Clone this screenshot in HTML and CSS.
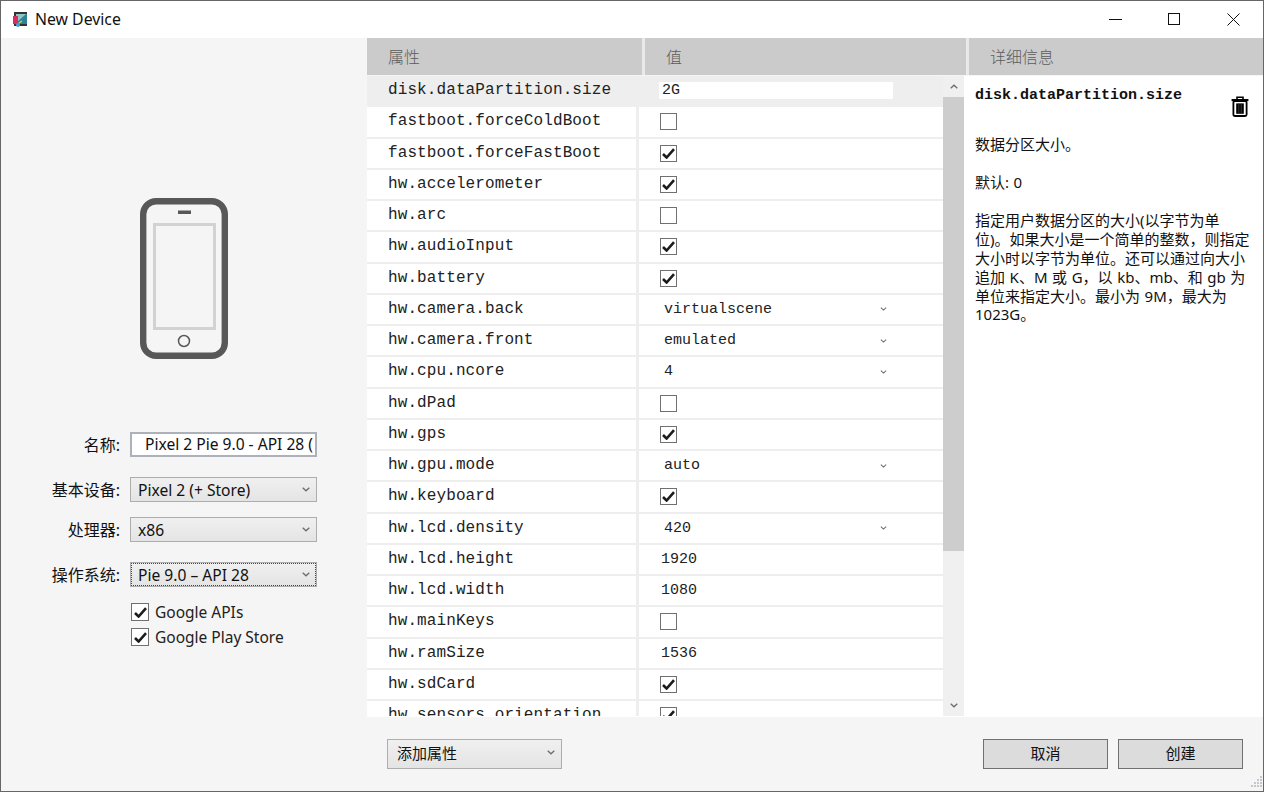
FILE: index.html
```html
<!DOCTYPE html>
<html lang="zh">
<head>
<meta charset="utf-8">
<title>New Device</title>
<link rel="stylesheet" href="styles.css">
</head>
<body>
<svg class="defs" width="0" height="0">
  <symbol id="chev" viewBox="0 0 8 5"><path d="M.7 .7 4 3.8 7.3 .7" fill="none" stroke="#6d6d6d" stroke-width="1.3"/></symbol>
  <symbol id="tick" viewBox="0 0 13 11"><path d="M1 6 4.6 9.5 12 1.2" fill="none" stroke="#1c1c1c" stroke-width="2.6"/></symbol>
</svg>
<div class="window">
  <header class="titlebar">
    <svg class="app-icon" viewBox="0 0 15 16" width="15" height="16">
      <rect x="1" y="1" width="13" height="14" fill="#333"/>
      <rect x="3" y="3" width="11" height="10" fill="#2d8296"/>
      <path d="M3 3h10L3 12z" fill="#8fc6c4"/>
      <rect x="0" y="5" width="5" height="8" fill="#d92a64"/>
      <circle cx="5" cy="14" r="2" fill="#4a9fe0"/>
      <path d="M6 12 9 10" stroke="#d7d34a" stroke-width="1.5"/>
    </svg>
    <span class="title">New Device</span>
    <div class="win-controls">
      <svg class="win-btn" viewBox="0 0 13 13" width="13" height="13"><path d="M0 6.5h13" stroke="#111" stroke-width="1"/></svg>
      <svg class="win-btn" viewBox="0 0 13 13" width="13" height="13"><rect x=".5" y=".5" width="11" height="11" fill="none" stroke="#111"/></svg>
      <svg class="win-btn" viewBox="0 0 13 13" width="13" height="13"><path d="M.5 .5l12 12M12.5 .5l-12 12" stroke="#111"/></svg>
    </div>
  </header>

  <div class="content">
    <aside class="left">
      <svg class="phone" viewBox="0 0 88 161" width="88" height="161">
        <rect x="3.2" y="3.2" width="81.6" height="154.6" rx="13" fill="none" stroke="#585858" stroke-width="6.4"/>
        <rect x="14.5" y="26.5" width="60" height="104" fill="none" stroke="#d2d2d2" stroke-width="3"/>
        <rect x="38" y="12.5" width="13" height="3.5" fill="#585858"/>
        <circle cx="44" cy="143" r="5.5" fill="none" stroke="#585858" stroke-width="1.5"/>
      </svg>
      <div class="form">
        <div class="form-row">
          <label class="lbl">名称:</label>
          <div class="name-input"><span class="name-text">Pixel 2 Pie 9.0 - API 28 (</span></div>
        </div>
        <div class="form-row">
          <label class="lbl">基本设备:</label>
          <div class="combo"><span>Pixel 2 (+ Store)</span><svg class="chev"><use href="#chev"/></svg></div>
        </div>
        <div class="form-row tight">
          <label class="lbl">处理器:</label>
          <div class="combo"><span>x86</span><svg class="chev"><use href="#chev"/></svg></div>
        </div>
        <div class="form-row">
          <label class="lbl">操作系统:</label>
          <div class="combo focused"><span>Pie 9.0 – API 28</span><svg class="chev"><use href="#chev"/></svg></div>
        </div>
      </div>
      <div class="checks">
        <div class="check-line"><span class="cb big"><svg><use href="#tick"/></svg></span>Google APIs</div>
        <div class="check-line"><span class="cb big"><svg><use href="#tick"/></svg></span>Google Play Store</div>
      </div>
    </aside>

    <section class="center">
      <div class="headers">
        <div class="hd hd-name">属性</div>
        <div class="hd hd-val">值</div>
        <div class="hd hd-det">详细信息</div>
      </div>
      <div class="body">
        <div class="table-wrap">
          <div class="rows">
            <div class="row selected"><div class="key">disk.dataPartition.size</div><div class="val"><span class="val-input">2G</span></div></div>
            <div class="row"><div class="key">fastboot.forceColdBoot</div><div class="val"><span class="cb"></span></div></div>
            <div class="row"><div class="key">fastboot.forceFastBoot</div><div class="val"><span class="cb"><svg><use href="#tick"/></svg></span></div></div>
            <div class="row"><div class="key">hw.accelerometer</div><div class="val"><span class="cb"><svg><use href="#tick"/></svg></span></div></div>
            <div class="row"><div class="key">hw.arc</div><div class="val"><span class="cb"></span></div></div>
            <div class="row"><div class="key">hw.audioInput</div><div class="val"><span class="cb"><svg><use href="#tick"/></svg></span></div></div>
            <div class="row"><div class="key">hw.battery</div><div class="val"><span class="cb"><svg><use href="#tick"/></svg></span></div></div>
            <div class="row"><div class="key">hw.camera.back</div><div class="val"><div class="val-sel"><span>virtualscene</span><svg class="chev small"><use href="#chev"/></svg></div></div></div>
            <div class="row"><div class="key">hw.camera.front</div><div class="val"><div class="val-sel"><span>emulated</span><svg class="chev small"><use href="#chev"/></svg></div></div></div>
            <div class="row"><div class="key">hw.cpu.ncore</div><div class="val"><div class="val-sel"><span>4</span><svg class="chev small"><use href="#chev"/></svg></div></div></div>
            <div class="row"><div class="key">hw.dPad</div><div class="val"><span class="cb"></span></div></div>
            <div class="row"><div class="key">hw.gps</div><div class="val"><span class="cb"><svg><use href="#tick"/></svg></span></div></div>
            <div class="row"><div class="key">hw.gpu.mode</div><div class="val"><div class="val-sel"><span>auto</span><svg class="chev small"><use href="#chev"/></svg></div></div></div>
            <div class="row"><div class="key">hw.keyboard</div><div class="val"><span class="cb"><svg><use href="#tick"/></svg></span></div></div>
            <div class="row"><div class="key">hw.lcd.density</div><div class="val"><div class="val-sel"><span>420</span><svg class="chev small"><use href="#chev"/></svg></div></div></div>
            <div class="row"><div class="key">hw.lcd.height</div><div class="val"><span class="val-text">1920</span></div></div>
            <div class="row"><div class="key">hw.lcd.width</div><div class="val"><span class="val-text">1080</span></div></div>
            <div class="row"><div class="key">hw.mainKeys</div><div class="val"><span class="cb"></span></div></div>
            <div class="row"><div class="key">hw.ramSize</div><div class="val"><span class="val-text">1536</span></div></div>
            <div class="row"><div class="key">hw.sdCard</div><div class="val"><span class="cb"><svg><use href="#tick"/></svg></span></div></div>
            <div class="row"><div class="key">hw.sensors.orientation</div><div class="val"><span class="cb"><svg><use href="#tick"/></svg></span></div></div>
          </div>
        </div>
        <div class="scrollbar">
          <div class="sb-btn"><svg class="chev sb-up"><use href="#chev"/></svg></div>
          <div class="sb-track"><div class="sb-thumb"></div></div>
          <div class="sb-btn"><svg class="chev"><use href="#chev"/></svg></div>
        </div>
        <div class="details">
          <div class="det-head">
            <span class="det-title">disk.dataPartition.size</span>
            <svg class="trash" viewBox="0 0 18 21" width="18" height="21">
              <path d="M6 3V1.2h6V3" fill="none" stroke="#000" stroke-width="1.6"/>
              <rect x="0.6" y="3" width="16.8" height="2.2" fill="#000"/>
              <rect x="2.4" y="5" width="13.2" height="15" rx="1.5" fill="#fff" stroke="#000" stroke-width="1.8"/>
              <rect x="5.2" y="7.4" width="7.6" height="10.4" fill="#000"/>
              <path d="M7.8 7.4v10.4M10.2 7.4v10.4" stroke="#444" stroke-width=".8"/>
            </svg>
          </div>
          <p class="det-p first">数据分区大小。</p>
          <p class="det-p">默认: 0</p>
          <p class="det-p">指定用户数据分区的大小(以字节为单位)。如果大小是一个简单的整数，则指定大小时以字节为单位。还可以通过向大小追加 K、M 或 G，以 kb、mb、和 gb 为单位来指定大小。最小为 9M，最大为 1023G。</p>
        </div>
      </div>
      <footer class="bottom">
        <div class="combo add"><span>添加属性</span><svg class="chev"><use href="#chev"/></svg></div>
        <div class="buttons">
          <button class="btn">取消</button>
          <button class="btn">创建</button>
        </div>
      </footer>
    </section>
  </div>
  <svg class="grip" width="16" height="16" viewBox="0 0 16 16" fill="#c4c8cc">
    <rect x="13" y="1" width="2" height="2"/>
    <rect x="10" y="4" width="2" height="2"/><rect x="13" y="4" width="2" height="2"/>
    <rect x="7" y="7" width="2" height="2"/><rect x="10" y="7" width="2" height="2"/><rect x="13" y="7" width="2" height="2"/>
    <rect x="4" y="10" width="2" height="2"/><rect x="7" y="10" width="2" height="2"/><rect x="10" y="10" width="2" height="2"/><rect x="13" y="10" width="2" height="2"/>
  </svg>
</div>
</body>
</html>
```
FILE: styles.css
```css
* { box-sizing: border-box; }
html, body { margin: 0; padding: 0; height: 100%; overflow: hidden; }
body { font-family: "Noto Sans", "Noto Sans CJK SC", sans-serif; font-size: 15.6px; color: #111; background: #fff; }
.defs { position: absolute; }
.window { position: relative; width: 1264px; height: 792px; border: 1px solid #666; display: flex; flex-direction: column; background: #f5f5f5; }

.titlebar { height: 37px; flex: none; background: #fff; display: flex; align-items: center; }
.app-icon { margin-left: 12px; margin-top: -1px; }
.title { margin-left: 7px; font-size: 15.8px; color: #111; line-height: 20px; margin-top: -1px; }
.win-controls { margin-left: auto; display: flex; align-items: center; gap: 46px; padding-right: 23px; margin-top: -1px; }

.content { flex: 1; display: flex; min-height: 0; }
.left { width: 366px; flex: none; display: flex; flex-direction: column; background: #f5f5f5; }
.phone { display: block; margin: 160px 0 0 139px; }

.form { margin-top: 73px; display: flex; flex-direction: column; gap: 20px; }
.form-row { display: flex; align-items: center; gap: 10px; height: 25px; }
.form-row.tight { margin-top: -5px; }
.lbl { width: 119px; flex: none; text-align: right; white-space: nowrap; font-size: 16px; line-height: 22px; }
.name-input { width: 187px; height: 25px; border: 2px solid #adb1ba; background: #fff; padding-left: 13px; overflow: hidden; line-height: 20px; white-space: nowrap; }

.combo { width: 187px; height: 25px; border: 1px solid #adadad; background: linear-gradient(#f0f0f0, #e4e4e4); display: flex; align-items: center; justify-content: space-between; padding: 0 6px 0 7px; white-space: nowrap; }
.combo.focused { outline: 1px dotted #444; outline-offset: -2px; }
.chev { width: 8px; height: 5px; flex: none; }
.chev.small { width: 7px; height: 4px; }

.checks { margin: 16px 0 0 130px; display: flex; flex-direction: column; gap: 7px; }
.check-line { display: flex; align-items: center; gap: 6px; height: 18px; color: #222; font-size: 15.5px; }

.cb { width: 17px; height: 17px; flex: none; display: inline-flex; align-items: center; justify-content: center; border: 1px solid #707070; background: #fff; }
.cb.big { width: 18px; height: 18px; }
.cb svg { width: 13px; height: 11px; }

.center { flex: 1; display: flex; flex-direction: column; min-width: 0; }
.headers { height: 37px; flex: none; display: flex; background: #e9e9e9; gap: 3px; }
.hd { background: #cbcbcb; color: #5c5c5c; font-size: 16px; line-height: 37px; font-family: "Noto Sans CJK SC", sans-serif; font-weight: 300; }
.hd-name { width: 275px; padding-left: 21px; }
.hd-val { width: 321px; padding-left: 21px; }
.hd-det { flex: 1; padding-left: 21px; }

.body { height: 641px; flex: none; display: flex; background: #fff; margin-top: 1px; overflow: hidden; }
.table-wrap { width: 576px; flex: none; overflow: hidden; height: 640px; }
.rows { display: flex; flex-direction: column; }
.row { height: 31.25px; flex: none; display: flex; border-bottom: 2px solid #eee; background: #fff; }
.row.selected { background: #eee; }
.key { width: 272px; flex: none; padding-left: 21px; border-right: 3px solid #eee; font-family: "Liberation Mono", monospace; font-size: 16px; letter-spacing: .1px; line-height: 28px; color: #222; white-space: nowrap; }
.val { flex: 1; display: flex; align-items: center; padding-left: 21px; font-family: "Liberation Mono", monospace; font-size: 15px; color: #222; }
.val-input { width: 234px; height: 17px; margin-left: -1px; background: #fff; line-height: 17px; padding-left: 3px; }
.val-text { margin-left: 1px; }
.val-sel { width: 226px; margin-left: 4px; display: flex; align-items: center; justify-content: space-between; padding-right: 3px; }

.scrollbar { width: 21px; flex: none; height: 640px; display: flex; flex-direction: column; background: #f0f0f0; }
.sb-btn { height: 21px; flex: none; display: flex; align-items: center; justify-content: center; padding: 0 1px; }
.sb-up { transform: rotate(180deg); }
.sb-track { flex: 1; min-height: 0; }
.sb-thumb { width: 21px; height: 454px; background: #cdcdcd; }

.details { flex: 1; padding: 12px 10px 0 11px; background: #fff; color: #111; font-size: 15px; line-height: 18.8px; word-spacing: .7px; min-width: 0; }
.det-head { display: flex; justify-content: space-between; height: 34px; }
.det-title { font-family: "Liberation Mono", monospace; font-weight: 700; font-size: 15px; line-height: 16px; }
.trash { margin: 8px 4px 0 0; flex: none; }
.det-p { margin: 0 0 19.4px; }
.det-p.first { margin-top: 13px; }

.bottom { flex: 1; display: flex; align-items: flex-start; justify-content: space-between; padding: 22px 20px 0 20px; background: #f5f5f5; }
.combo.add { width: 175px; height: 30px; padding: 0 6px 3px 9px; font-size: 15px; }
.buttons { display: flex; gap: 10px; }
.btn { width: 125px; height: 30px; background: #dcdcdc; border: 1px solid #707070; font: 15px "Noto Sans CJK SC", sans-serif; color: #111; padding: 0 0 3px; }
.grip { position: absolute; right: 0; bottom: 0; }
```
